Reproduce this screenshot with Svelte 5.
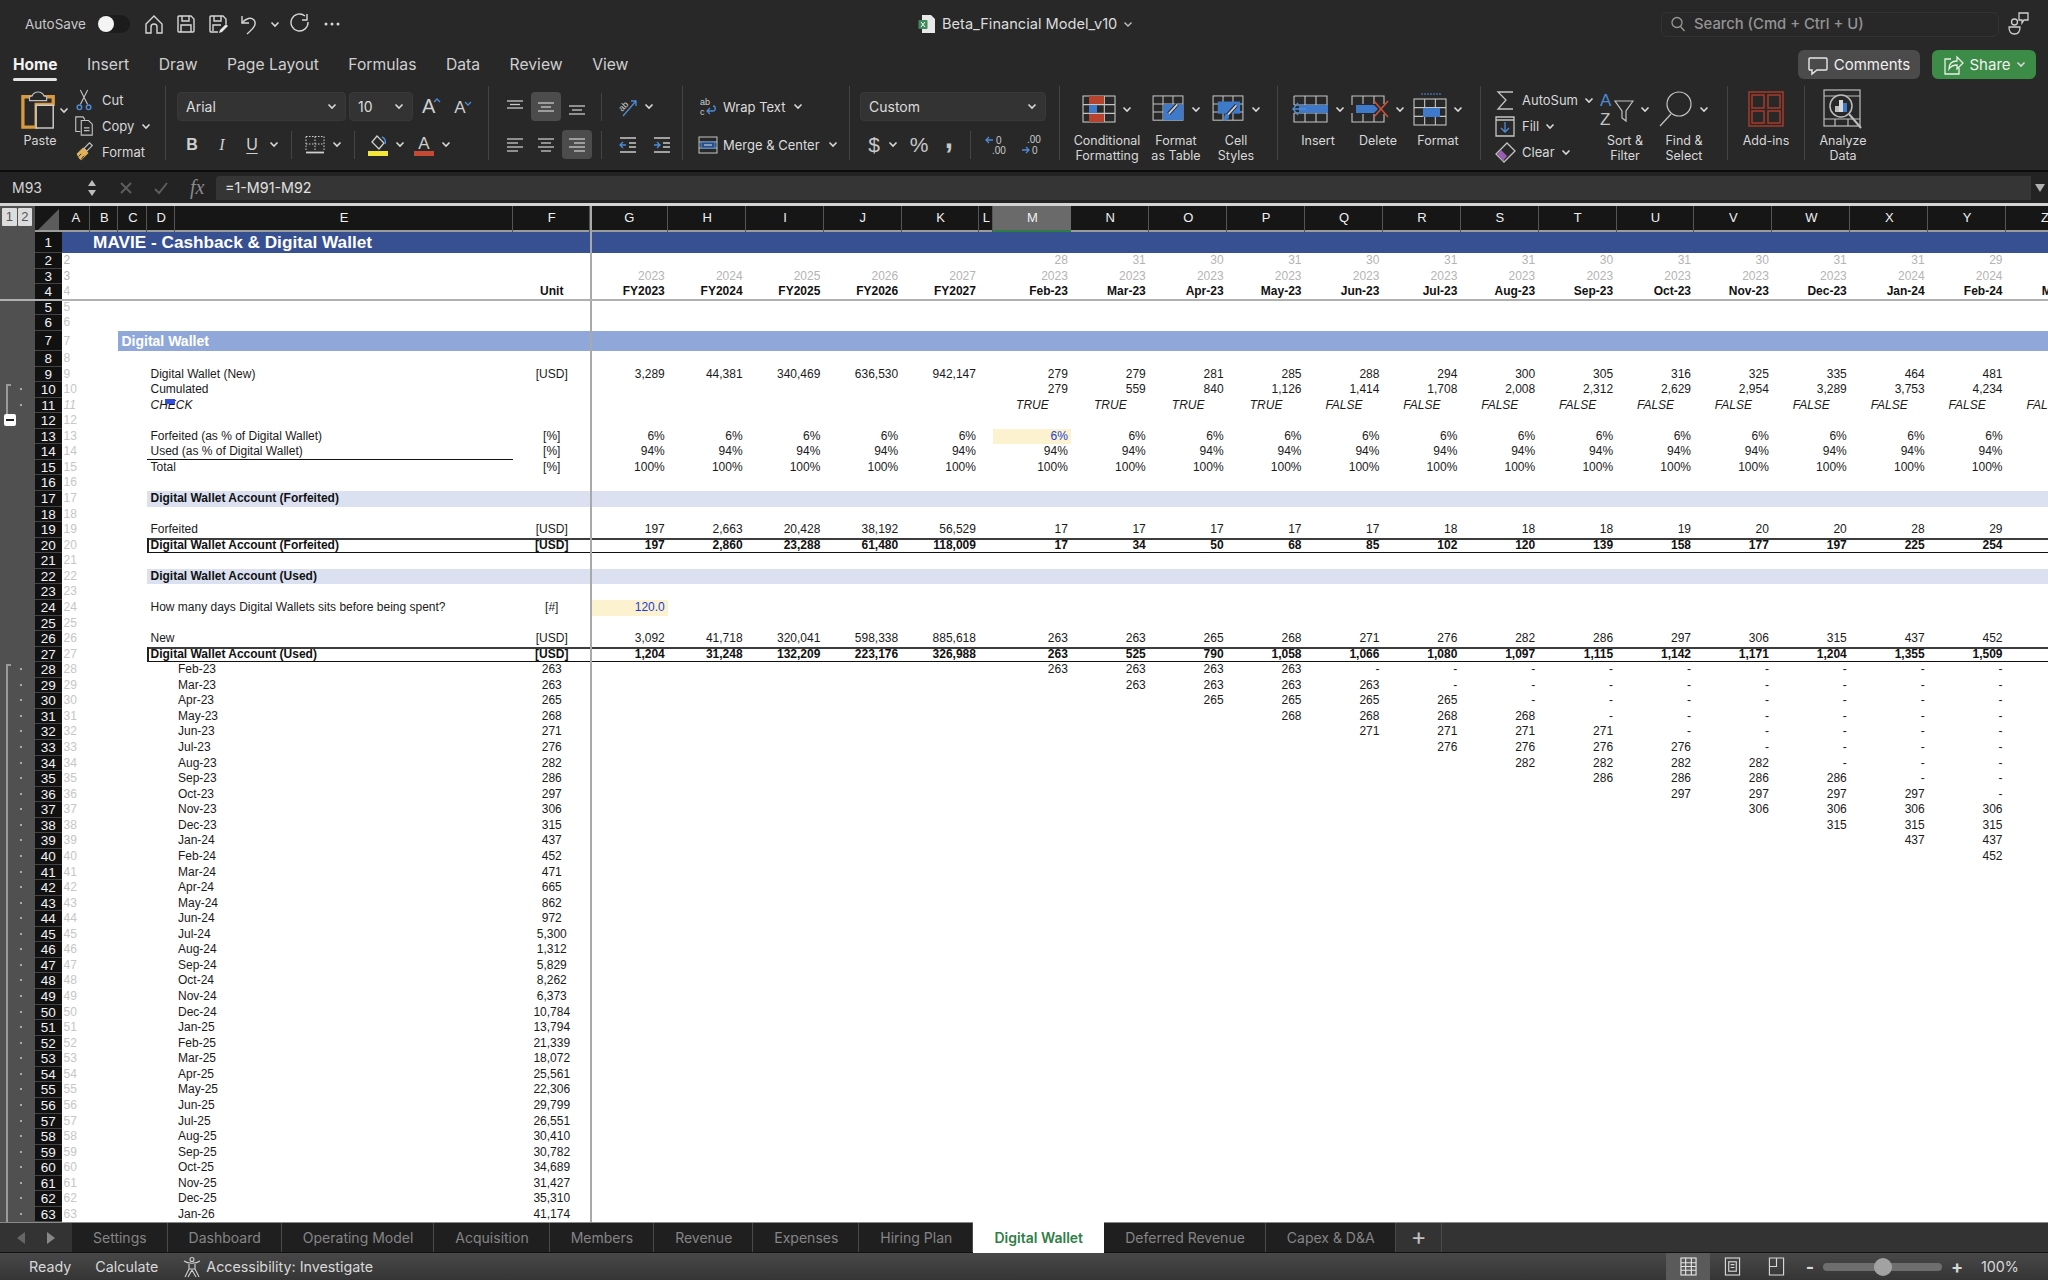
<script>
  const COLS = 'ABCDEFGHIJKLMNOPQRSTUVWXYZ'.split('');
  const FY = ['G', 'H', 'I', 'J', 'K'];
  const MO = 'MNOPQRSTUVWXY'.split('');

  const monthNames = ['Jan', 'Feb', 'Mar', 'Apr', 'May', 'Jun', 'Jul', 'Aug', 'Sep', 'Oct', 'Nov', 'Dec'];
  const opening = [
    '263', '263', '265', '268', '271', '276', '282', '286', '297', '306', '315', '437', '452', '471', '665', '862',
    '972', '5,300', '1,312', '5,829', '8,262', '6,373', '10,784', '13,794', '21,339', '18,072', '25,561', '22,306',
    '29,799', '26,551', '30,410', '30,782', '34,689', '31,427', '35,310', '41,174'
  ];

  // fills a row: first five go to the FY columns, the rest to the months
  function vals(fy, mo) {
    const t = {};
    (fy || []).forEach((v, i) => (t[FY[i]] = v));
    (mo || []).forEach((v, i) => (t[MO[i]] = v));
    return t;
  }
  const same = (v, n) => Array(n).fill(v);

  const defs = {
    1: { cls: 'title', t: { B: 'MAVIE - Cashback & Digital Wallet' } },
    2: { cls: 'muted', t: vals([], ['28', '31', '30', '31', '30', '31', '31', '30', '31', '30', '31', '31', '29']) },
    3: {
      cls: 'muted',
      t: vals(['2023', '2024', '2025', '2026', '2027'], [...same('2023', 11), '2024', '2024'])
    },
    4: {
      cls: 'bold headend',
      t: {
        F: 'Unit',
        Z: 'Mar-24',
        ...vals(['FY2023', 'FY2024', 'FY2025', 'FY2026', 'FY2027'], [
          'Feb-23', 'Mar-23', 'Apr-23', 'May-23', 'Jun-23', 'Jul-23', 'Aug-23', 'Sep-23', 'Oct-23', 'Nov-23', 'Dec-23', 'Jan-24', 'Feb-24'
        ])
      }
    },
    7: { cls: 'section', t: { C: 'Digital Wallet' } },
    9: {
      t: {
        D: 'Digital Wallet (New)',
        F: '[USD]',
        ...vals(['3,289', '44,381', '340,469', '636,530', '942,147'], ['279', '279', '281', '285', '288', '294', '300', '305', '316', '325', '335', '464', '481'])
      }
    },
    10: {
      t: {
        D: 'Cumulated',
        ...vals([], ['279', '559', '840', '1,126', '1,414', '1,708', '2,008', '2,312', '2,629', '2,954', '3,289', '3,753', '4,234'])
      }
    },
    11: {
      cls: 'check',
      t: { D: 'CHECK', Z: 'FALSE', ...vals([], [...same('TRUE', 4), ...same('FALSE', 9)]) }
    },
    13: {
      input: 'M',
      t: { D: 'Forfeited (as % of Digital Wallet)', F: '[%]', ...vals(same('6%', 5), same('6%', 13)) }
    },
    14: {
      cls: 'under',
      t: { D: 'Used (as % of Digital Wallet)', F: '[%]', ...vals(same('94%', 5), same('94%', 13)) }
    },
    15: { t: { D: 'Total', F: '[%]', ...vals(same('100%', 5), same('100%', 13)) } },
    17: { cls: 'sub bold', t: { D: 'Digital Wallet Account (Forfeited)' } },
    19: {
      t: {
        D: 'Forfeited',
        F: '[USD]',
        ...vals(['197', '2,663', '20,428', '38,192', '56,529'], ['17', '17', '17', '17', '17', '18', '18', '18', '19', '20', '20', '28', '29'])
      }
    },
    20: {
      cls: 'box bold',
      t: {
        D: 'Digital Wallet Account (Forfeited)',
        F: '[USD]',
        ...vals(['197', '2,860', '23,288', '61,480', '118,009'], ['17', '34', '50', '68', '85', '102', '120', '139', '158', '177', '197', '225', '254'])
      }
    },
    22: { cls: 'sub bold', t: { D: 'Digital Wallet Account (Used)' } },
    24: {
      input: 'G',
      t: { D: 'How many days Digital Wallets sits before being spent?', F: '[#]', G: '120.0' }
    },
    26: {
      t: {
        D: 'New',
        F: '[USD]',
        ...vals(['3,092', '41,718', '320,041', '598,338', '885,618'], ['263', '263', '265', '268', '271', '276', '282', '286', '297', '306', '315', '437', '452'])
      }
    },
    27: {
      cls: 'box bold',
      t: {
        D: 'Digital Wallet Account (Used)',
        F: '[USD]',
        ...vals(['1,204', '31,248', '132,209', '223,176', '326,988'], ['263', '525', '790', '1,058', '1,066', '1,080', '1,097', '1,115', '1,142', '1,171', '1,204', '1,355', '1,509'])
      }
    }
  };

  // rows 28-63: each cohort sits four months from its start, then runs off as a dash
  opening.forEach((v, i) => {
    const m = (i + 1) % 12;
    const yr = 23 + Math.floor((i + 1) / 12);
    const t = { E: `${monthNames[m]}-${yr}`, F: v };
    MO.forEach((c, j) => {
      if (j >= i && j < i + 4) t[c] = v;
      else if (j >= i + 4) t[c] = '-';
    });
    defs[28 + i] = { t };
  });

  const rows = Array.from({ length: 63 }, (_, i) => {
    const n = i + 1;
    const d = defs[n] || { t: {} };
    return { n, cls: d.cls || '', t: d.t, input: d.input, dot: n === 10 || n === 11 || n >= 28 };
  });

  const tabs = ['Settings', 'Dashboard', 'Operating Model', 'Acquisition', 'Members', 'Revenue', 'Expenses', 'Hiring Plan'];
  const ribbonTabs = ['Insert', 'Draw', 'Page Layout', 'Formulas', 'Data', 'Review', 'View'];
</script>

{#snippet chev()}
  <svg class="chev" viewBox="0 0 10 7"><path d="M1.5 1.5 5 5l3.5-3.5" fill="none" stroke="#d8d8d8" stroke-width="1.6" /></svg>
{/snippet}

{#snippet tinychev()}
  <svg class="chev" viewBox="0 0 10 7"><path d="M1.5 1.5 5 5l3.5-3.5" fill="none" stroke="#c0c0c0" stroke-width="1.4" /></svg>
{/snippet}

{#snippet lines(ys, kind)}
  <svg class="ic22" viewBox="0 0 22 22" fill="none" stroke="#c9c9c9" stroke-width="1.3">
    {#each ys as y, i}
      {@const short = i % 2 === 1}
      <path d={kind === 'left' ? `M3 ${y}h${short ? 11 : 16}` : kind === 'right' ? `M${short ? 8 : 3} ${y}H19` : `M${short ? 6 : 3} ${y}H${short ? 16 : 19}`} />
    {/each}
  </svg>
{/snippet}

{#snippet grid3(x, y, w, h)}
  <rect {x} {y} width={w} height={h} />
  <path d="M{x + w / 3} {y}v{h}M{x + (2 * w) / 3} {y}v{h}M{x} {y + h / 3}h{w}M{x} {y + (2 * h) / 3}h{w}" />
{/snippet}

{#snippet brush(dx, dy)}
  <g transform="translate({dx} {dy})">
    <path d="M14 2 4 13" stroke="#222" stroke-width="4" />
    <path d="M14 2 4 13" stroke="#cfcfcf" stroke-width="2" fill="none" />
    <path d="M3 11c2 0 4 2 3 4-1 3-4 4-7 3 2-1 2-2 2-4 0-1 1-3 2-3Z" fill="#3f7cc9" stroke="none" />
  </g>
{/snippet}

<div class="window">
  <header class="titlebar">
    <div class="autosave">AutoSave</div>
    <div class="toggle"><i></i></div>
    <div class="qa">
      <svg class="ic22" viewBox="0 0 22 22" fill="none" stroke="#d6d6d6" stroke-width="1.4"><path d="M3 11 11 3l8 8v9h-5v-6a3 3 0 0 0-6 0v6H3Z" /></svg>
      <svg class="ic22" viewBox="0 0 22 22" fill="none" stroke="#d6d6d6" stroke-width="1.4"><path d="M3 4a1 1 0 0 1 1-1h12l3 3v12a1 1 0 0 1-1 1H4a1 1 0 0 1-1-1Z" /><path d="M7 3v5h7V3M6 19v-7h10v7" /></svg>
      <svg class="ic22" viewBox="0 0 22 22" fill="none" stroke="#d6d6d6" stroke-width="1.4"><path d="M11 19H4a1 1 0 0 1-1-1V4a1 1 0 0 1 1-1h12l3 3v5" /><path d="M7 3v5h7V3M6 18v-6h8" /><path d="m12 20 1-3 6-6 2 2-6 6Z" fill="#e8e8e8" stroke="none" /></svg>
      <svg class="ic22" viewBox="0 0 22 22" fill="none" stroke="#d6d6d6" stroke-width="1.4"><path d="M3 3v7h7" /><path d="M3 10c4-5 9-6 12-3 3 4 0 8-7 14" /></svg>
      <span class="qachev">{@render chev()}</span>
      <svg class="ic22" viewBox="0 0 22 22" fill="none" stroke="#d6d6d6" stroke-width="1.4"><path d="M16 3a8.500 8.500 0 1 0 3 6" /><path d="M16 1v6h-5" transform="translate(2 0)" /></svg>
      <svg class="ic22" viewBox="0 0 22 22" fill="#d6d6d6"><circle cx="5" cy="11" r="1.500" /><circle cx="11" cy="11" r="1.500" /><circle cx="17" cy="11" r="1.500" /></svg>
    </div>
    <div class="doc">
      <svg class="docicon" viewBox="0 0 18 20"><path d="M4 1h9l4 4v14H4Z" fill="#e8e8e8" /><rect x="0.500" y="6" width="9" height="9" rx="1" fill="#3f8a5a" /><path d="m3 8 4 5M7 8l-4 5" stroke="#fff" stroke-width="1" /></svg>
      <span>Beta_Financial Model_v10</span>
      {@render tinychev()}
    </div>
    <div class="search">
      <svg class="ic16" viewBox="0 0 16 16" fill="none" stroke="#999" stroke-width="1.300"><circle cx="7" cy="6.500" r="5" /><path d="m10.500 10.500 4 4.500" /></svg>
      <span>Search (Cmd + Ctrl + U)</span>
    </div>
    <svg class="people" viewBox="0 0 22 26" fill="none" stroke="#cfcfcf" stroke-width="1.300"><circle cx="6.500" cy="11" r="3" /><path d="M1 16h11c0 5-2 7-5.500 7S1 21 1 16Z" /><path d="M11 2h9v7h-4l-2 3V9h-3Z" /></svg>
  </header>

  <nav class="tabsrow">
    <div class="rtab on">Home</div>
    {#each ribbonTabs as tab}
      <div class="rtab">{tab}</div>
    {/each}
    <div class="rspace"></div>
    <div class="pill comments">
      <svg class="ic22" viewBox="0 0 22 22" fill="none" stroke="#e8e8e8" stroke-width="1.400"><path d="M3 4h16a1 1 0 0 1 1 1v10a1 1 0 0 1-1 1h-9l-5 4v-4H3a1 1 0 0 1-1-1V5a1 1 0 0 1 1-1Z" /></svg>
      Comments
    </div>
    <div class="pill share">
      <svg class="ic22" viewBox="0 0 22 22" fill="none" stroke="#e8f2e8" stroke-width="1.300"><path d="M9 5H3v15h14v-6" /><path d="M7 15c0-5 3-8 8-8V3l6 6-6 6v-4c-4 0-6 1-8 4Z" /></svg>
      Share
      {@render chev()}
    </div>
  </nav>

  <section class="ribbon">
    <!-- clipboard -->
    <div class="group g-clip">
      <div class="paste">
        <div class="pasteicon">
          <svg class="ic-paste" viewBox="0 0 38 40" fill="none">
            <path d="M2 6h32v8H16v24H2Z" fill="none" stroke="#d99a3f" stroke-width="3.500" />
            <path d="M12 5c0-2 3-4 6-4s6 2 6 4l3 1v4H9V6Z" fill="#282828" stroke="#bdbdbd" stroke-width="1.300" />
            <rect x="16" y="15" width="18" height="24" fill="#282828" stroke="#d0d0d0" stroke-width="1.500" />
          </svg>
          {@render chev()}
        </div>
        <span class="lbl13">Paste</span>
      </div>
      <div class="cliplist">
        <div class="line">
          <svg class="ic22" viewBox="0 0 22 24" fill="none" stroke="#c4c4c4" stroke-width="1.200"><path d="m7 1 8 16M15 1 7 17" /><circle cx="6" cy="20" r="2.500" stroke="#4d8bd6" stroke-width="1.600" /><circle cx="16" cy="20" r="2.500" stroke="#4d8bd6" stroke-width="1.600" /></svg>
          <span>Cut</span>
        </div>
        <div class="line">
          <svg class="ic22" viewBox="0 0 22 24" fill="none" stroke="#c4c4c4" stroke-width="1.200"><path d="M7 18H2V2h8l2 3" /><path d="M8 6h8l4 4v12H8Z" /><path d="M11 14h6M11 17h6" /></svg>
          <span>Copy</span>
          {@render chev()}
        </div>
        <div class="line">
          <svg class="ic22" viewBox="0 0 22 24"><path d="m11 8 6-6 3 3-6 6Z" fill="none" stroke="#c4c4c4" stroke-width="1.300" /><path d="M3 14 10 7l6 6-8 8c-2-1-4-4-5-7Z" fill="#e1b259" /><path d="m8 20 3-4M5 17l3-3" stroke="#282828" /></svg>
          <span>Format</span>
        </div>
      </div>
    </div>
    <i class="vsep"></i>

    <!-- font -->
    <div class="group g-font">
      <div class="rrow">
        <div class="select w-font"><span>Arial</span>{@render chev()}</div>
        <div class="select w-size"><span>10</span>{@render chev()}</div>
        <div class="growfont">
          <span class="biga">A<svg viewBox="0 0 8 5"><path d="M1 4 4 1l3 3" fill="none" stroke="#4d8bd6" stroke-width="1.300" /></svg></span>
          <span class="biga small">A<svg viewBox="0 0 8 5"><path d="M1 1l3 3 3-3" fill="none" stroke="#4d8bd6" stroke-width="1.300" /></svg></span>
        </div>
      </div>
      <div class="rrow low fontbtns">
        <span class="tb b">B</span>
        <span class="tb i">I</span>
        <span class="tb u">U</span>
        {@render chev()}
        <i class="isep"></i>
        <svg class="ic22" viewBox="0 0 22 22" fill="none" stroke="#cfcfcf"><path d="M2 2.500h18M2 2.500v15M20 2.500v15M11 2.500v15M2 10h18" stroke-dasharray="1.500 1.500" /><path d="M2 18.500h18" stroke-width="1.800" /></svg>
        {@render chev()}
        <i class="isep"></i>
        <svg class="ic22" viewBox="0 0 22 22"><path d="m10 2 7 7-5 6-7-7Z" fill="none" stroke="#cfcfcf" stroke-width="1.300" /><path d="M15 3c3 1 4 4 3 7" stroke="#4d8bd6" stroke-width="1.500" fill="none" /><rect x="1" y="17" width="20" height="5" fill="#f3e83a" /></svg>
        {@render chev()}
        <svg class="ic22" viewBox="0 0 22 22"><text x="11" y="14.500" text-anchor="middle" font-family="Liberation Sans" font-size="17" fill="#cfcfcf">A</text><rect x="1" y="17" width="20" height="5" fill="#c54a35" /></svg>
        {@render chev()}
      </div>
    </div>
    <i class="vsep"></i>

    <!-- alignment -->
    <div class="group g-align">
      <div class="rrow">
        <div class="ab">{@render lines([5, 8.500, 12], 'center')}</div>
        <div class="ab on">{@render lines([7, 11, 15], 'center')}</div>
        <div class="ab">{@render lines([10, 14, 18], 'center')}</div>
        <i class="isep"></i>
        <svg class="ic22 orient" viewBox="0 0 22 22" fill="none"><text x="2" y="13" font-family="Liberation Sans" font-size="9" fill="#cfcfcf" transform="rotate(-45 7 11)">ab</text><path d="M6 20 19 5M14 5h5v5" stroke="#4d8bd6" stroke-width="1.300" /></svg>
        {@render chev()}
      </div>
      <div class="rrow low">
        <div class="ab">{@render lines([5, 9, 13, 17], 'left')}</div>
        <div class="ab">{@render lines([5, 9, 13, 17], 'center')}</div>
        <div class="ab on">{@render lines([5, 9, 13, 17], 'right')}</div>
        <i class="isep"></i>
        <svg class="ic22 orient" viewBox="0 0 22 22" fill="none" stroke="#c9c9c9" stroke-width="1.300"><path d="M3 4h16M12 9h7M12 13h7M3 18h16" /><path d="M9 11H3m3-3-3 3 3 3" stroke="#4d8bd6" /></svg>
        <svg class="ic22 indent" viewBox="0 0 22 22" fill="none" stroke="#c9c9c9" stroke-width="1.300"><path d="M3 4h16M12 9h7M12 13h7M3 18h16" /><path d="M3 11h6m-3-3 3 3-3 3" stroke="#4d8bd6" /></svg>
      </div>
    </div>
    <i class="vsep"></i>

    <!-- wrap and merge -->
    <div class="group g-wrap">
      <div class="rrow wrapline">
        <svg class="ic22" viewBox="0 0 22 22" fill="none"><text x="3" y="9" font-family="Liberation Sans" font-size="9" fill="#cfcfcf">ab</text><text x="3" y="19" font-family="Liberation Sans" font-size="9" fill="#cfcfcf">c</text><path d="M10 15h6c3 0 3-5 0-5M13 12l-3 3 3 3" stroke="#4d8bd6" stroke-width="1.300" /></svg>
        <span>Wrap Text</span>
        {@render chev()}
      </div>
      <div class="rrow low wrapline">
        <svg class="ic22" viewBox="0 0 22 22" fill="none" stroke="#c4c4c4"><rect x="2" y="3" width="18" height="16" /><path d="M2 8h18M2 14h18" /><rect x="4" y="8" width="14" height="6" fill="#2c4f7d" stroke="#4d8bd6" /><path d="M7 11h8" stroke="#d8e7f8" /></svg>
        <span>Merge &amp; Center</span>
        {@render chev()}
      </div>
    </div>
    <i class="vsep"></i>

    <!-- number -->
    <div class="group g-num">
      <div class="rrow"><div class="select w-num"><span>Custom</span>{@render chev()}</div></div>
      <div class="rrow low numbtns">
        <span class="sym dollar">$</span>
        {@render chev()}
        <span class="sym pct">%</span>
        <span class="sym comma">,</span>
        <i class="isep"></i>
        <svg class="ic26" viewBox="0 0 26 22" fill="none"><path d="M9 6H2m3-3-3 3 3 3" stroke="#4d8bd6" stroke-width="1.300" /><text x="12" y="10" font-family="Liberation Sans" font-size="10" fill="#c8c8c8">0</text><text x="8" y="20" font-family="Liberation Sans" font-size="10" fill="#c8c8c8">.00</text></svg>
        <svg class="ic26" viewBox="0 0 26 22" fill="none"><path d="M3 16h7m-3-3 3 3-3 3" stroke="#4d8bd6" stroke-width="1.300" /><text x="8" y="9" font-family="Liberation Sans" font-size="10" fill="#c8c8c8">.00</text><text x="13" y="20" font-family="Liberation Sans" font-size="10" fill="#c8c8c8">0</text></svg>
      </div>
    </div>
    <i class="vsep"></i>

    <!-- styles -->
    <div class="group g-styles">
      <div class="big w-cf">
        <div class="bigicon">
          <svg class="ic34" viewBox="0 0 34 28" fill="none" stroke="#c4c4c4" stroke-width="1.100">
            {@render grid3(1, 1, 32, 26)}
            <rect x="7" y="1" width="15" height="8" fill="#b5432e" stroke="none" />
            <rect x="7" y="10" width="8" height="8" fill="#3f79c9" stroke="none" />
            <rect x="7" y="19" width="15" height="8" fill="#b5432e" stroke="none" />
          </svg>
          {@render chev()}
        </div>
        <span class="lbl13">Conditional<br />Formatting</span>
      </div>
      <div class="big w-st">
        <div class="bigicon">
          <svg class="ic34" viewBox="0 0 34 30" fill="none" stroke="#c4c4c4" stroke-width="1.100">
            {@render grid3(1, 1, 32, 26)}
            <rect x="12" y="10" width="21" height="17" fill="#3f79c9" stroke="none" />
            {@render brush(13, 8)}
          </svg>
          {@render chev()}
        </div>
        <span class="lbl13">Format<br />as Table</span>
      </div>
      <div class="big w-st">
        <div class="bigicon">
          <svg class="ic34" viewBox="0 0 34 30" fill="none" stroke="#c4c4c4" stroke-width="1.100">
            {@render grid3(1, 1, 32, 26)}
            <rect x="6" y="7" width="24" height="13" fill="#3f79c9" stroke="none" />
            {@render brush(12, 9)}
          </svg>
          {@render chev()}
        </div>
        <span class="lbl13">Cell<br />Styles</span>
      </div>
    </div>
    <i class="vsep"></i>

    <!-- cells -->
    <div class="group g-cells">
      <div class="big w-cell">
        <div class="bigicon">
          <svg class="ic38" viewBox="0 0 38 28" fill="none" stroke="#c4c4c4" stroke-width="1.100">
            <path d="M3 1h33v26H3V18M3 10V1M14 1v26M25 1v26M3 10h33M3 18h33" />
            <rect x="8" y="10" width="29" height="8" fill="#3f79c9" stroke="none" />
            <path d="M15 14H2m5-6-5 6 5 6" stroke="#4d8bd6" stroke-width="1.400" />
          </svg>
          {@render chev()}
        </div>
        <span class="lbl13">Insert</span>
      </div>
      <div class="big w-cell">
        <div class="bigicon">
          <svg class="ic38" viewBox="0 0 38 28" fill="none" stroke="#c4c4c4" stroke-width="1.100">
            <path d="M1 10V1h32v8M1 18v9h32v-8M12 1v8M23 1v8M12 19v8M23 19v8" />
            <path d="M5 10h18l4 4-4 4H5Z" fill="#3f79c9" stroke="none" />
            <path d="m23 6 14 16M37 6 23 22" stroke="#cf5138" stroke-width="1.500" />
          </svg>
          {@render chev()}
        </div>
        <span class="lbl13">Delete</span>
      </div>
      <div class="big w-cell">
        <div class="bigicon">
          <svg class="ic34 tall" viewBox="0 0 34 34" fill="none" stroke="#c4c4c4" stroke-width="1.100">
            <path d="M8 2h20" stroke="#4d8bd6" stroke-width="1.200" stroke-dasharray="2 1" />
            {@render grid3(1, 7, 32, 26)}
            <rect x="10" y="16" width="17" height="9" fill="#3f79c9" stroke="none" />
          </svg>
          {@render chev()}
        </div>
        <span class="lbl13">Format</span>
      </div>
    </div>
    <i class="vsep"></i>

    <!-- editing -->
    <div class="group g-edit">
      <div class="editlist">
        <div class="line">
          <svg class="ic22" viewBox="0 0 22 22" fill="none" stroke="#c4c4c4" stroke-width="1.300"><path d="M19 3H4l8 8-8 9h15" /></svg>
          <span>AutoSum</span>
          {@render chev()}
        </div>
        <div class="line">
          <svg class="ic22" viewBox="0 0 22 22" fill="none" stroke="#c4c4c4" stroke-width="1.300"><path d="M2 2h18v19H2Z M2 5h18" /><path d="M11 7v10m-4-4 4 4 4-4" stroke="#4d8bd6" /></svg>
          <span>Fill</span>
          {@render chev()}
        </div>
        <div class="line">
          <svg class="ic22" viewBox="0 0 22 22"><path d="M13 2 21 10 10 21 2 13Z" fill="none" stroke="#c4c4c4" stroke-width="1.300" /><path d="m7 9 6 6-4 5-6-7Z" fill="#9a5fb0" /></svg>
          <span>Clear</span>
          {@render chev()}
        </div>
      </div>
      <div class="big w-sort">
        <div class="bigicon">
          <svg class="ic34 tall" viewBox="0 0 34 36" fill="none" stroke="#c4c4c4" stroke-width="1.200">
            <text x="0" y="15" font-family="Liberation Sans" font-size="17" fill="#4d8bd6" stroke="none">A</text>
            <text x="0" y="34" font-family="Liberation Sans" font-size="17" fill="#c4c4c4" stroke="none">Z</text>
            <path d="M15 10h18L26 20v10l-4 -3v-7Z" />
          </svg>
          {@render chev()}
        </div>
        <span class="lbl13">Sort &amp;<br />Filter</span>
      </div>
      <div class="big w-sort">
        <div class="bigicon">
          <svg class="ic34 tall" viewBox="0 0 34 36" fill="none" stroke="#c4c4c4" stroke-width="1.200"><circle cx="20" cy="13" r="12" /><path d="M12 23 1 35" /></svg>
          {@render chev()}
        </div>
        <span class="lbl13">Find &amp;<br />Select</span>
      </div>
    </div>
    <i class="vsep"></i>

    <div class="group g-one">
      <div class="big">
        <div class="bigicon">
          <svg class="ic36" viewBox="0 0 36 36" fill="none" stroke="#a83a2a" stroke-width="1.500"><rect x="1" y="1" width="34" height="34" /><rect x="4" y="4" width="12" height="13" /><rect x="20" y="4" width="12" height="13" /><rect x="4" y="20" width="12" height="12" /><rect x="20" y="20" width="12" height="12" /></svg>
        </div>
        <span class="lbl13">Add-ins</span>
      </div>
    </div>
    <i class="vsep"></i>
    <div class="group g-one">
      <div class="big">
        <div class="bigicon">
          <svg class="ic40" viewBox="0 0 40 40" fill="none" stroke="#bdbdbd" stroke-width="1.200">
            <rect x="1" y="1" width="36" height="36" />
            <path d="M1 7h36M1 30h36M12 30v7M25 30v7" />
            <circle cx="18" cy="17" r="11" fill="#282828" stroke-width="1.500" />
            <rect x="12" y="17" width="4" height="6" fill="#bdbdbd" stroke="none" />
            <rect x="16" y="11" width="4" height="12" fill="#d8d8d8" stroke="none" />
            <rect x="20" y="14" width="4" height="9" fill="#3f79c9" stroke="none" />
            <path d="m26 25 12 14" stroke-width="2" />
          </svg>
        </div>
        <span class="lbl13">Analyze<br />Data</span>
      </div>
    </div>
  </section>

  <section class="formula">
    <div class="namebox">
      <span>M93</span>
      <svg class="stepper" viewBox="0 0 10 18" fill="#bdbdbd"><path d="M5 1 9 7H1ZM5 17 1 11h8Z" /></svg>
    </div>
    <svg class="fb" viewBox="0 0 14 14" stroke="#5d5d5d" stroke-width="2" fill="none"><path d="m2 2 10 10M12 2 2 12" /></svg>
    <svg class="fb ok" viewBox="0 0 14 14" stroke="#5d5d5d" stroke-width="2" fill="none"><path d="m1 8 4 4 8-10" /></svg>
    <span class="fx">fx</span>
    <div class="finput">=1-M91-M92</div>
    <svg class="fdrop" viewBox="0 0 10 8" fill="#b0b0b0"><path d="M0 0h10L5 8Z" /></svg>
  </section>

  <main class="sheet">
    <div class="colhead">
      <div class="levels"><span>1</span><span>2</span></div>
      <div class="corner"><svg viewBox="0 0 26 26"><path d="M24 3v21H3Z" fill="#5c5c5c" /></svg></div>
      {#each COLS as c}
        <div class="ch" class:sel={c === 'M'} class:fz={c === 'F'}>{c}</div>
      {/each}
    </div>

    {#each rows as r}
      <div class="row r{r.n} {r.cls}">
        <div class="gut">{#if r.dot}<i class="dot"></i>{/if}</div>
        <div class="rh">{r.n}</div>
        {#each COLS as c}
          <div class="cell {c}" class:input={r.input === c}>
            {#if c === 'A' && r.n > 1}{r.n}{:else if r.t[c]}<span>{r.t[c]}</span>{/if}
          </div>
        {/each}
      </div>
    {/each}

    <!-- overlays: frozen pane lines and outline brackets -->
    <i class="freeze-v"></i>
    <i class="freeze-h"></i>
    <i class="bracket b1"></i>
    <i class="collapse"></i>
    <i class="bracket b2"></i>
    <i class="comment-mark"></i>
  </main>

  <div class="sheettabs">
    <div class="navarrows">
      <svg viewBox="0 0 10 14" fill="#666"><path d="M9 1v12L1 7Z" /></svg>
      <svg viewBox="0 0 10 14" fill="#888"><path d="M1 1v12l8-6Z" /></svg>
    </div>
    {#each tabs as tab}
      <div class="stab">{tab}</div>
    {/each}
    <div class="stab active">Digital Wallet</div>
    <div class="stab">Deferred Revenue</div>
    <div class="stab">Capex &amp; D&amp;A</div>
    <div class="plus">+</div>
  </div>

  <footer class="status">
    <span>Ready</span>
    <span>Calculate</span>
    <div class="acc">
      <svg viewBox="0 0 20 22" fill="none" stroke="#d0d0d0" stroke-width="1.100"><circle cx="10" cy="3.500" r="2" /><path d="M2 5c4 3 12 3 16 0M7 8v5l-4 8M13 8v5l4 8M7 13h6M10 14l-4 7M10 14l4 7" /></svg>
      <span>Accessibility: Investigate</span>
    </div>
    <div class="rspace"></div>
    <div class="zoomctl">
      <div class="view on"><svg viewBox="0 0 18 20" fill="none" stroke="#e4e4e4" stroke-width="1.200"><rect x="1" y="1" width="16" height="18" /><path d="M6 1v18M12 1v18M1 6h16M1 10h16M1 14h16" /></svg></div>
      <div class="view"><svg viewBox="0 0 18 20" fill="none" stroke="#d8d8d8" stroke-width="1.200"><rect x="1.500" y="1" width="15" height="18" /><rect x="5" y="5" width="8" height="10" /><path d="M7 8h4M7 11h4" /></svg></div>
      <div class="view"><svg viewBox="0 0 18 20" fill="none" stroke="#d8d8d8" stroke-width="1.200"><path d="M1.500 1h15v18h-15Z M9 1v9H1.500" /></svg></div>
      <span class="zoomsign minus">-</span>
      <div class="slider"><i></i></div>
      <span class="zoomsign plussign">+</span>
      <span class="pct100">100%</span>
    </div>
  </footer>
</div>

<style>
  :global(body) {
    margin: 0;
    background: #282828;
  }

  .window {
    width: 2048px;
    height: 1280px;
    display: flex;
    flex-direction: column;
    overflow: hidden;
    background: #282828;
    color: #d8d8d8;
    font-family: Inter, "Liberation Sans", sans-serif;
    font-size: 13px;
  }

  svg {
    display: block;
    flex: none;
  }

  .chev {
    width: 10px;
    height: 7px;
  }

  .ic16 { width: 16px; height: 16px; }
  .ic22 { width: 22px; height: 22px; }
  .ic26 { width: 26px; height: 22px; }
  .ic34 { width: 34px; height: 28px; }
  .ic34.tall { height: 36px; }
  .ic38 { width: 38px; height: 28px; }
  .ic36 { width: 36px; height: 36px; }
  .ic40 { width: 40px; height: 40px; }

  .rspace {
    flex: 1;
  }

  /* title bar */
  .titlebar {
    height: 48px;
    flex: none;
    display: flex;
    align-items: center;
    padding-left: 25px;
  }

  .autosave {
    width: 73px;
    color: #c8c8c8;
    font-size: 13.500px;
  }

  .toggle {
    width: 32px;
    height: 18px;
    border-radius: 9px;
    background: #1c1c1c;
    position: relative;
  }

  .toggle i {
    position: absolute;
    left: 0;
    top: 1px;
    width: 16px;
    height: 16px;
    border-radius: 50%;
    background: #f4f4f4;
  }

  .qa {
    display: flex;
    align-items: center;
    gap: 10px;
    margin-left: 13px;
  }

  .qachev {
    margin: 0 -1px;
  }

  .doc {
    display: flex;
    align-items: center;
    gap: 6px;
    margin-left: 575px;
    width: 743px;
    font-size: 14.600px;
    color: #dcdcdc;
  }

  .docicon {
    width: 18px;
    height: 20px;
  }

  .search {
    width: 338px;
    height: 25px;
    box-sizing: border-box;
    border: 1px solid #333;
    border-radius: 6px;
    display: flex;
    align-items: center;
    gap: 8px;
    padding-left: 8px;
    color: #949494;
    font-size: 14.800px;
    font-weight: 500;
  }

  .people {
    width: 22px;
    height: 26px;
    margin-left: 9px;
  }

  /* ribbon tabs */
  .tabsrow {
    height: 33px;
    flex: none;
    display: flex;
    align-items: center;
    padding-left: 13px;
    padding-right: 12px;
    gap: 29.500px;
  }

  .rtab {
    position: relative;
    font-size: 15.700px;
    color: #cfcfcf;
    line-height: 30px;
  }

  .rtab.on {
    color: #f2f2f2;
    font-weight: 700;
    font-size: 15.500px;
  }

  .rtab.on::after {
    content: "";
    position: absolute;
    left: 0;
    right: 0;
    bottom: -1px;
    height: 3px;
    border-radius: 2px;
    background: #e4e4e4;
  }

  .pill {
    height: 29px;
    border-radius: 6px;
    display: flex;
    align-items: center;
    justify-content: center;
    gap: 5px;
    font-size: 15px;
    color: #f0f0f0;
  }

  .comments {
    width: 122px;
    background: #4b4b4b;
    margin-right: -17px;
  }

  .share {
    width: 104px;
    background: #3c8b46;
  }

  /* ribbon */
  .ribbon {
    height: 91px;
    display: flex;
    align-items: flex-start;
    border-bottom: 2px solid #0c0c0c;
    box-sizing: border-box;
    flex: none;
  }

  .vsep {
    width: 1px;
    height: 74px;
    margin-top: 5px;
    background: #444;
    flex: none;
  }

  .group {
    flex: none;
    box-sizing: border-box;
    height: 100%;
    padding-top: 11px;
  }

  .g-clip { width: 165px; display: flex; padding-left: 18px; padding-top: 10px; }
  .g-font { width: 322px; padding-left: 11px; }
  .g-align { width: 193px; padding-left: 11px; }
  .g-wrap { width: 166px; padding-left: 14px; }
  .g-num { width: 209px; padding-left: 10px; }
  .g-styles { width: 217px; display: flex; padding-left: 2px; padding-top: 7px; }
  .g-cells { width: 202px; display: flex; padding-left: 10px; padding-top: 7px; }
  .g-edit { width: 246px; display: flex; padding-top: 7px; }
  .g-one { width: 76px; padding-top: 7px; }

  .rrow {
    height: 29px;
    display: flex;
    align-items: center;
    gap: 1px;
  }

  .rrow.low {
    margin-top: 9px;
  }

  .paste {
    width: 44px;
    display: flex;
    flex-direction: column;
    align-items: center;
  }

  .pasteicon {
    display: flex;
    align-items: center;
    gap: 2px;
    margin-left: 10px;
  }

  .ic-paste {
    width: 36px;
    height: 38px;
  }

  .paste .lbl13 {
    margin-top: 4px;
  }

  .lbl13 {
    font-size: 12.500px;
    line-height: 15.500px;
    color: #d8d8d8;
    text-align: center;
    white-space: nowrap;
  }

  .cliplist {
    margin-left: 11px;
    margin-top: -2px;
    display: flex;
    flex-direction: column;
    gap: 4px;
  }

  .line {
    height: 22px;
    display: flex;
    align-items: center;
    gap: 7px;
    font-size: 13px;
    color: #d8d8d8;
  }

  .select {
    height: 29px;
    box-sizing: border-box;
    padding: 0 8px;
    border-radius: 4px;
    background: #333;
    border: 1px solid #393939;
    display: flex;
    align-items: center;
    justify-content: space-between;
    font-size: 14px;
    color: #dcdcdc;
  }

  .w-font { width: 169px; }
  .w-size { width: 64px; margin-left: 2px; }
  .w-num { width: 186px; }

  .growfont {
    display: flex;
    gap: 13px;
    margin-left: 8px;
    align-items: flex-end;
  }

  .biga {
    position: relative;
    font-family: "Liberation Sans", sans-serif;
    font-size: 20px;
    color: #cfcfcf;
    padding-right: 6px;
  }

  .biga.small {
    font-size: 17px;
  }

  .biga svg {
    position: absolute;
    right: 0;
    top: 3px;
    width: 8px;
    height: 5px;
  }

  .fontbtns {
    gap: 8px;
    padding-left: 4px;
  }

  .fontbtns .chev {
    margin-left: -2px;
  }

  .tb {
    width: 22px;
    text-align: center;
    font-family: "Liberation Sans", sans-serif;
    font-size: 16px;
    color: #cfcfcf;
  }

  .tb.b { font-weight: 700; }
  .tb.i { font-style: italic; font-family: "Liberation Serif", serif; }
  .tb.u { text-decoration: underline; text-underline-offset: 3px; }

  .isep {
    width: 1px;
    height: 28px;
    margin: 0 4px;
    background: #444;
    flex: none;
  }

  .ab {
    width: 30px;
    height: 29px;
    border-radius: 4px;
    display: flex;
    align-items: center;
    justify-content: center;
  }

  .ab.on {
    background: #4c4c4c;
  }

  .g-align .isep {
    margin: 0 5px 0 8px;
  }

  .g-align .orient {
    margin-left: 9px;
    margin-right: 4px;
  }

  .g-align .indent {
    margin-left: 7px;
  }

  .wrapline {
    gap: 4px;
    font-size: 13px;
    color: #dcdcdc;
  }

  .wrapline .chev {
    margin-left: 4px;
  }

  .numbtns {
    gap: 6px;
    padding-left: 6px;
  }

  .sym {
    font-family: "Liberation Sans", sans-serif;
    color: #c8c8c8;
    text-align: center;
  }

  .dollar { font-size: 21px; width: 16px; }
  .pct { font-size: 21px; width: 22px; margin-left: 4px; }
  .comma { font-size: 30px; width: 14px; margin: -14px 4px 0 6px; font-weight: 700; }

  .numbtns .ic26 {
    margin-left: 3px;
  }

  .big {
    display: flex;
    flex-direction: column;
    align-items: center;
    flex: none;
  }

  .bigicon {
    height: 42px;
    display: flex;
    align-items: center;
    gap: 6px;
    margin-bottom: 2.500px;
  }

  .w-cf { width: 90px; }
  .w-st { width: 48px; margin-right: 12px; }
  .w-cell { width: 60px; }
  .w-sort { width: 56px; margin-right: 3px; }

  .editlist {
    width: 116px;
    padding: 1px 0 0 13px;
    box-sizing: border-box;
    display: flex;
    flex-direction: column;
    gap: 4px;
  }

  .editlist .line {
    gap: 6px;
  }

  .g-one .big {
    width: 76px;
  }

  /* formula bar */
  .formula {
    height: 34px;
    flex: none;
    box-sizing: border-box;
    display: flex;
    align-items: center;
    border-bottom: 3px solid #d4d4d4;
    background: #232323;
  }

  .namebox {
    width: 102px;
    height: 30px;
    box-sizing: border-box;
    padding: 0 5px 0 12px;
    display: flex;
    align-items: center;
    justify-content: space-between;
    font-size: 14px;
    color: #d4d4d4;
  }

  .stepper {
    width: 10px;
    height: 18px;
  }

  .fb {
    width: 14px;
    height: 14px;
    margin-left: 17px;
  }

  .fb.ok {
    margin-left: 21px;
  }

  .fx {
    margin-left: 22px;
    width: 24px;
    font-family: "Liberation Serif", serif;
    font-style: italic;
    font-size: 20px;
    color: #8a8a8a;
  }

  .finput {
    margin-left: 2px;
    width: 1815px;
    height: 24px;
    box-sizing: border-box;
    padding-left: 9px;
    display: flex;
    align-items: center;
    background: #353535;
    border-radius: 3px 0 0 0;
    font-size: 14.300px;
    color: #e0e0e0;
  }

  .fdrop {
    width: 10px;
    height: 8px;
    margin-left: 4px;
  }

  /* sheet */
  .sheet {
    --cols: 35px 26.500px 28.600px 28.400px 29px 27.500px 338px 77.500px repeat(5, 77.800px) 14px repeat(13, 77.900px) 78px;
    position: relative;
    flex: 1;
    min-height: 0;
    overflow: hidden;
    background: #fff;
    font-family: "Liberation Sans", Arial, sans-serif;
    font-size: 12px;
    color: #1a1a1a;
  }

  .colhead {
    display: grid;
    grid-template-columns: var(--cols);
    height: 26px;
    background: #161616;
    box-shadow: inset 0 -2px 0 #9c9c9c;
  }

  .levels {
    background: #505050;
    display: flex;
    gap: 1px;
    padding: 2px 3px 6px 2px;
    box-sizing: border-box;
  }

  .levels span {
    flex: 1;
    background: #dcdcdc;
    color: #555;
    font-size: 13px;
    line-height: 18px;
    text-align: center;
    border-radius: 1px;
  }

  .corner svg {
    width: 26px;
    height: 26px;
  }

  .ch {
    color: #f0f0f0;
    font-size: 13px;
    text-align: center;
    line-height: 24px;
    box-shadow: inset -1px 0 0 #555;
    overflow: hidden;
  }

  .ch.sel {
    background: #6a6a6a;
    box-shadow: inset 0 -2px 0 #2f7c44;
  }

  .row {
    display: grid;
    grid-template-columns: var(--cols);
    height: 15.570px;
    line-height: 15.570px;
    white-space: nowrap;
  }

  .row.r1 {
    height: 21px;
    line-height: 21px;
  }

  .row.r7 {
    height: 20.150px;
    line-height: 20.150px;
  }

  .gut {
    background: #505050;
    position: relative;
  }

  .dot {
    position: absolute;
    left: 20px;
    top: 6px;
    width: 2px;
    height: 2px;
    background: #aaa;
  }

  .rh {
    background: #111;
    color: #f2f2f2;
    font-size: 13.500px;
    text-align: center;
    box-shadow: inset 0 -1px 0 #444;
  }

  .cell {
    min-width: 0;
    text-align: right;
    padding-right: 3.500px;
    box-sizing: border-box;
  }

  .cell span {
    position: relative;
    z-index: 1;
  }

  .cell.A {
    text-align: left;
    padding: 0 0 0 2px;
    color: #c6c6c6;
    font-size: 12px;
  }

  .cell.B, .cell.C, .cell.D, .cell.E {
    text-align: left;
    padding: 0 0 0 3px;
  }

  .cell.F {
    text-align: center;
    padding: 0;
  }

  .cell.input {
    background: #fdf2d0;
    color: #1a3fd0;
  }

  .muted .cell {
    color: #b4b4b4;
  }

  .bold .cell:not(.A) {
    font-weight: 700;
    color: #111;
  }

  .title .cell:nth-child(n + 3) {
    background: #375091;
  }

  .title .cell.B {
    color: #fff;
    font-size: 17.200px;
    font-weight: 700;
  }

  .section .cell:nth-child(n + 5) {
    background: #90a8d9;
  }

  .section .cell.C {
    color: #fff;
    font-size: 14px;
    font-weight: 700;
  }

  .sub .cell:nth-child(n + 6) {
    background: #dbe1f1;
  }

  .check .cell {
    font-style: italic;
  }

  .check .cell:nth-child(n + 9) {
    text-align: center;
    padding: 0;
  }

  .under .cell.D,
  .under .cell.E {
    box-shadow: inset 0 -1px 0 #111;
  }

  .box .cell:nth-child(n + 6) {
    box-shadow: inset 0 2px 0 #3d3d3d, inset 0 -1px 0 #111;
  }

  .box .cell.D {
    box-shadow: inset 2px 0 0 #222, inset 0 2px 0 #3d3d3d, inset 0 -1px 0 #111;
  }

  .freeze-v {
    position: absolute;
    left: 590px;
    top: 0;
    bottom: 0;
    width: 2px;
    background: #a9a9a9;
    z-index: 2;
  }

  .freeze-h {
    position: absolute;
    left: 0;
    right: 0;
    top: 92.500px;
    height: 2px;
    background: #b0b0b0;
    z-index: 2;
  }

  .bracket {
    position: absolute;
    left: 6px;
    width: 5px;
    border-left: 2px solid #9a9a9a;
    border-top: 2px solid #9a9a9a;
    box-sizing: border-box;
    z-index: 2;
  }

  .bracket.b1 { top: 178px; height: 34px; }
  .bracket.b2 { top: 458px; bottom: 0; }

  .collapse {
    position: absolute;
    left: 4px;
    top: 208px;
    width: 12px;
    height: 12px;
    background: #fff;
    border-radius: 2px;
    z-index: 3;
  }

  .collapse::after {
    content: "";
    position: absolute;
    left: 2px;
    right: 2px;
    top: 5px;
    height: 2px;
    background: #222;
  }

  .comment-mark {
    position: absolute;
    left: 165px;
    top: 193px;
    width: 10px;
    height: 5px;
    background: #3550d8;
    z-index: 2;
  }

  /* sheet tabs */
  .sheettabs {
    height: 31px;
    flex: none;
    box-sizing: border-box;
    display: flex;
    background: #333;
    border-top: 1px solid #8a8a8a;
    border-bottom: 1px solid #111;
  }

  .navarrows {
    width: 72px;
    display: flex;
    align-items: center;
    justify-content: center;
    gap: 20px;
  }

  .navarrows svg {
    width: 10px;
    height: 14px;
  }

  .stab {
    padding: 0 21px;
    line-height: 29px;
    background: #1f1f1f;
    color: #858585;
    font-size: 14px;
    box-shadow: inset -1px 0 0 #4a4a4a;
  }

  .stab.active {
    background: #fff;
    color: #2f7f46;
    font-weight: 600;
    width: 131px;
    box-sizing: border-box;
    padding: 0;
    text-align: center;
    box-shadow: none;
    margin-top: -1px;
    height: 31px;
    line-height: 31px;
  }

  .plus {
    width: 46px;
    text-align: center;
    color: #c0c0c0;
    font-size: 24px;
    line-height: 28px;
    box-shadow: inset -1px 0 0 #4a4a4a;
  }

  /* status bar */
  .status {
    height: 27px;
    flex: none;
    display: flex;
    align-items: center;
    padding-left: 29px;
    background: linear-gradient(#484848, #353535);
    color: #d8d8d8;
    font-size: 14.300px;
    gap: 24px;
  }

  .acc {
    display: flex;
    align-items: center;
    gap: 4px;
  }

  .acc svg {
    width: 20px;
    height: 22px;
  }

  .zoomctl {
    width: 382px;
    height: 100%;
    display: flex;
    align-items: center;
  }

  .view {
    width: 44px;
    height: 100%;
    display: flex;
    align-items: center;
    justify-content: center;
  }

  .view.on {
    background: #5a5a5a;
  }

  .view svg {
    width: 17px;
    height: 19px;
  }

  .zoomsign {
    width: 14px;
    text-align: center;
    font-size: 18px;
    font-weight: 700;
  }

  .minus {
    margin-left: 5px;
  }

  .plussign {
    margin-left: 8px;
  }

  .slider {
    width: 119px;
    height: 8px;
    margin-left: 6px;
    border-radius: 4px;
    background: #6e6e6e;
    position: relative;
  }

  .slider i {
    position: absolute;
    left: 51px;
    top: -5px;
    width: 18px;
    height: 18px;
    border-radius: 50%;
    background: #a2a2a2;
  }

  .pct100 {
    margin-left: 17px;
  }
</style>
